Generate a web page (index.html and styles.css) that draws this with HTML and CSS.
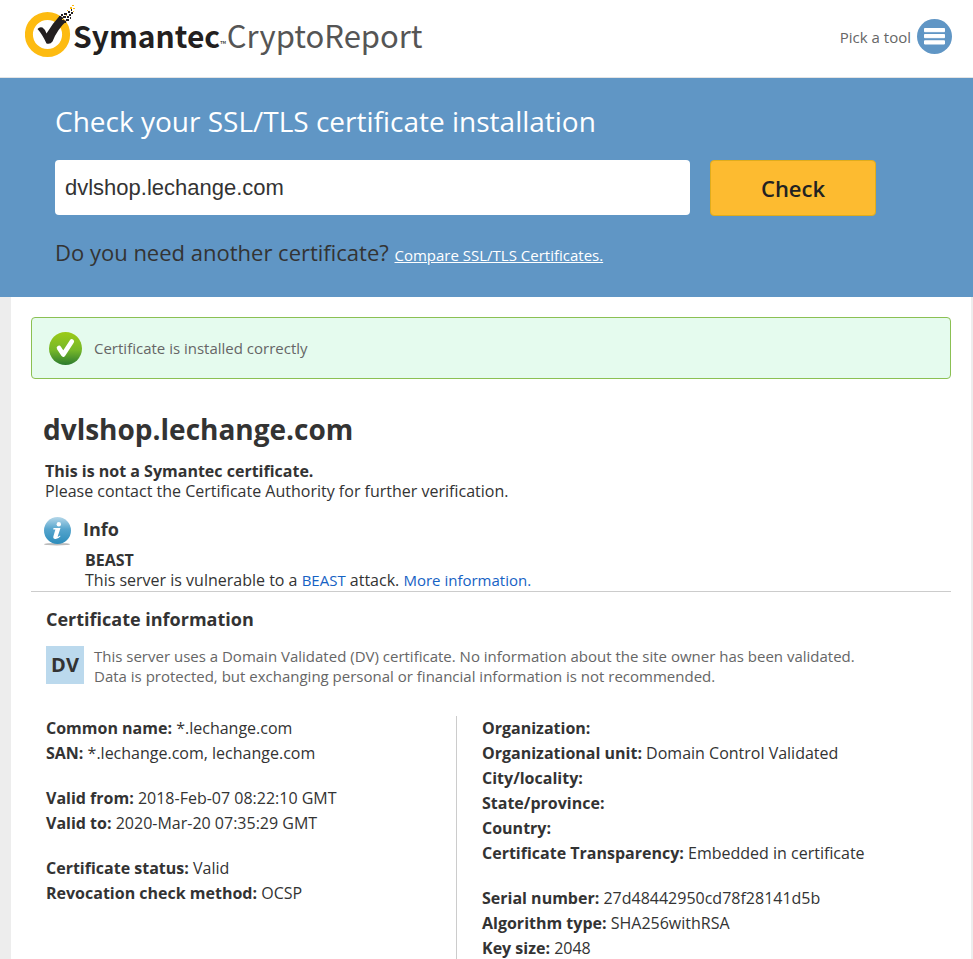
FILE: index.html
```html
<!DOCTYPE html>
<html lang="en">
<head>
<meta charset="utf-8">
<title>Symantec CryptoReport</title>
<link rel="stylesheet" href="styles.css">
</head>
<body>
<header class="top">
  <a class="brand" href="#">
    <svg class="mark" viewBox="0 0 52 54" aria-hidden="true">
      <circle cx="22.500" cy="29.500" r="18.600" fill="none" stroke="#fdbb11" stroke-width="8"/>
      <path d="M12.500 24q2-2.500 5-1.500 2.500 1.500 4 6Q27.500 18.500 34.500 11l3 1 1 3 3 1Q32.500 24 27.500 36.500q-2 3-6 2Q17.500 29.500 12.500 24z" fill="#231f20"/>
      <path d="M36 9h2v2h-2zM39 8h3v2h-3zM38 11h3v2h-3zM42 11h2v2h-2zM41 14h3v2h-3zM39 16h2v2h-2zM43 6h2v2h-2zM44 9h2v2h-2zM46 7h2v2h-2zM34 11h2v2h-2zM45 12h1v2h-1zM46 4h1v2h-1z" fill="#231f20"/>
      <path d="M47 0h2v1h-2zM45 2h2v2h-2zM48 3h2v1h-2zM42 5h1v1h-1zM48 6h1v1h-1zM41 10h1v1h-1zM37 14h1v1h-1z" fill="#fdbb11"/>
    </svg>
    <span class="name">Symantec</span><span class="tm">™</span><span class="product">CryptoReport</span>
  </a>
  <button class="tools" type="button">Pick a tool
    <svg class="menu" viewBox="0 0 35 35" aria-hidden="true">
      <circle cx="17.500" cy="17.500" r="17.500" fill="#6096c5"/>
      <path d="M7.500 9.500h20v3.200h-20zM7.500 15.500h20v3.200h-20zM7.500 21.800h20v3.200h-20z" fill="#fff" stroke="#fff" stroke-width="1" stroke-linejoin="round"/>
    </svg>
  </button>
</header>

<section class="hero">
  <h1><label for="host">Check your SSL/TLS certificate installation</label></h1>
  <form class="search">
    <input id="host" type="text" value="dvlshop.lechange.com">
    <button type="submit">Check</button>
  </form>
  <p class="need">Do you need another certificate? <a href="#">Compare SSL/TLS Certificates.</a></p>
</section>

<main class="page">
  <div class="alert">
    <svg class="ok" viewBox="0 0 33 33" aria-hidden="true">
      <defs><linearGradient id="green" x2="0" y2="1"><stop offset="0" stop-color="#9ccb17"/><stop offset=".55" stop-color="#76b729"/><stop offset="1" stop-color="#2b7a2e"/></linearGradient></defs>
      <circle cx="16.500" cy="16.500" r="16.500" fill="url(#green)"/>
      <path d="M10 16l4.300 6.500L22.800 9.500" fill="none" stroke="#fff" stroke-width="4.600" stroke-linecap="round" stroke-linejoin="round"/>
    </svg>
    <p>Certificate is installed correctly</p>
  </div>

  <section class="summary">
    <h2>dvlshop.lechange.com</h2>
    <p class="issuer"><b>This is not a Symantec certificate.</b><br>Please contact the Certificate Authority for further verification.</p>
    <div class="info">
      <svg class="info-icon" viewBox="0 0 28 29" aria-hidden="true">
        <defs><linearGradient id="blue" x2="0" y2="1"><stop offset="0" stop-color="#b5d7e9"/><stop offset=".45" stop-color="#56a5cd"/><stop offset="1" stop-color="#2c8cbb"/></linearGradient></defs>
        <ellipse cx="14" cy="27.200" rx="13" ry="1.300" fill="#bbb"/>
        <circle cx="14.500" cy="13.500" r="13.500" fill="url(#blue)"/>
        <circle cx="15.800" cy="7.200" r="2.200" fill="#fff"/>
        <path d="M10.500 11h7l-2.900 8.800q1 0 2.400-1.200l.5.700q-2.300 2.900-5.200 2.700-2.600-.2-1.900-2.700l2-6.800h-2.200z" fill="#fff"/>
      </svg>
      <div>
        <h3>Info</h3>
        <p class="issue"><b>BEAST</b><br>This server is vulnerable to a <a href="#">BEAST</a> attack. <a href="#">More information.</a></p>
      </div>
    </div>
  </section>

  <section class="certificate">
    <h3>Certificate information</h3>
    <div class="validation">
      <span class="badge">DV</span>
      <p>This server uses a Domain Validated (DV) certificate. No information about the site owner has been validated. Data is protected, but exchanging personal or financial information is not recommended.</p>
    </div>
    <div class="details">
      <div class="column">
        <ul>
          <li><b>Common name:</b> *.lechange.com</li>
          <li><b>SAN:</b> *.lechange.com, lechange.com</li>
        </ul>
        <ul>
          <li><b>Valid from:</b> 2018-Feb-07 08:22:10 GMT</li>
          <li><b>Valid to:</b> 2020-Mar-20 07:35:29 GMT</li>
        </ul>
        <ul>
          <li><b>Certificate status:</b> Valid</li>
          <li><b>Revocation check method:</b> OCSP</li>
        </ul>
      </div>
      <div class="column">
        <ul>
          <li><b>Organization:</b></li>
          <li><b>Organizational unit:</b> Domain Control Validated</li>
          <li><b>City/locality:</b></li>
          <li><b>State/province:</b></li>
          <li><b>Country:</b></li>
          <li><b>Certificate Transparency:</b> Embedded in certificate</li>
        </ul>
        <ul>
          <li><b>Serial number:</b> 27d48442950cd78f28141d5b</li>
          <li><b>Algorithm type:</b> SHA256withRSA</li>
          <li><b>Key size:</b> 2048</li>
        </ul>
      </div>
    </div>
  </section>
</main>
</body>
</html>
```
FILE: styles.css
```css
* { box-sizing: border-box; }
body {
  margin: 0;
  background: #ededed;
  color: #333;
  font: 16px/20px "Open Sans", sans-serif;
}
h1, h2, h3, p, ul { margin: 0; padding: 0; }
ul { list-style: none; }
a { color: #1662c4; text-decoration: none; }

.top {
  display: flex;
  justify-content: space-between;
  align-items: flex-start;
  height: 78px;
  padding: 0 21px 0 25px;
  background: #fff;
  border-bottom: 1px solid #e4e4e4;
}
.brand {
  display: flex;
  padding-top: 5px;
  color: #555;
  font: 31px/60px "Noto Sans CJK SC", sans-serif;
}
.mark { width: 52px; height: 54px; margin-right: -4px; }
.name { color: #231f20; font-size: 30px; font-weight: 700; }
.tm { color: #231f20; font-size: 8px; line-height: 78px; }
.product { margin-left: 1px; }
.tools {
  display: flex;
  align-items: center;
  gap: 6px;
  margin-top: 19px;
  padding: 0;
  border: 0;
  background: none;
  color: #666;
  font: 15px/20px "Open Sans", sans-serif;
}
.menu { width: 35px; height: 35px; }

.hero {
  height: 219px;
  padding: 23px 55px 0;
  background: #6096c5;
}
.hero h1 {
  color: #fff;
  font-size: 28px;
  font-weight: 400;
  line-height: 40px;
}
.search { display: flex; gap: 20px; margin-top: 19px; }
.search input {
  flex: 0 1 635px;
  min-width: 0;
  height: 55px;
  padding: 0 10px;
  border: 0;
  border-radius: 4px;
  background: #fff;
  color: #333;
  font: 22px "Liberation Sans", sans-serif;
}
.search button {
  width: 166px;
  height: 56px;
  border: 1px solid #e0ac1c;
  border-radius: 4px;
  background: #fdbb30;
  color: #222;
  font: 600 22px "Open Sans", sans-serif;
}
.need { margin-top: 21px; font-size: 22px; line-height: 30px; }
.need a { color: #fff; font-size: 15px; text-decoration: underline; }

.page {
  min-height: 662px;
  margin: 0 2px 0 11px;
  padding: 20px;
  background: #fff;
}
.alert {
  display: flex;
  align-items: center;
  gap: 12px;
  height: 62px;
  padding: 0 17px;
  border: 1px solid #8bc053;
  border-radius: 4px;
  background: #e5fbee;
  color: #666;
  font-size: 15px;
}
.ok { width: 33px; height: 33px; }

.summary { padding: 30px 12px 1px; border-bottom: 1px solid #ccc; }
.summary h2 { font-size: 28px; line-height: 40px; }
.issuer { margin: 12px 0 0 2px; }
h3 { font-size: 18px; font-weight: 700; line-height: 24px; }
.info { display: flex; gap: 12px; margin-top: 16px; }
.info-icon { width: 28px; height: 29px; }
.issue { margin: 9px 0 0 2px; }
.issue a { font-size: 15px; }

.certificate { padding: 15px 15px 0; }
.validation {
  display: flex;
  align-items: flex-start;
  gap: 10px;
  margin-top: 15px;
  color: #666;
  font-size: 15px;
}
.validation p { max-width: 780px; }
.badge {
  flex: none;
  width: 38px;
  height: 38px;
  background: #bbd9ed;
  color: #333;
  font: 700 20px/38px "Open Sans", sans-serif;
  text-align: center;
}
.details {
  display: grid;
  grid-template-columns: 410px 1fr;
  margin-top: 30px;
  line-height: 25px;
}
.column + .column { padding-left: 25px; border-left: 1px solid #ccc; }
.column ul + ul { margin-top: 20px; }
```
